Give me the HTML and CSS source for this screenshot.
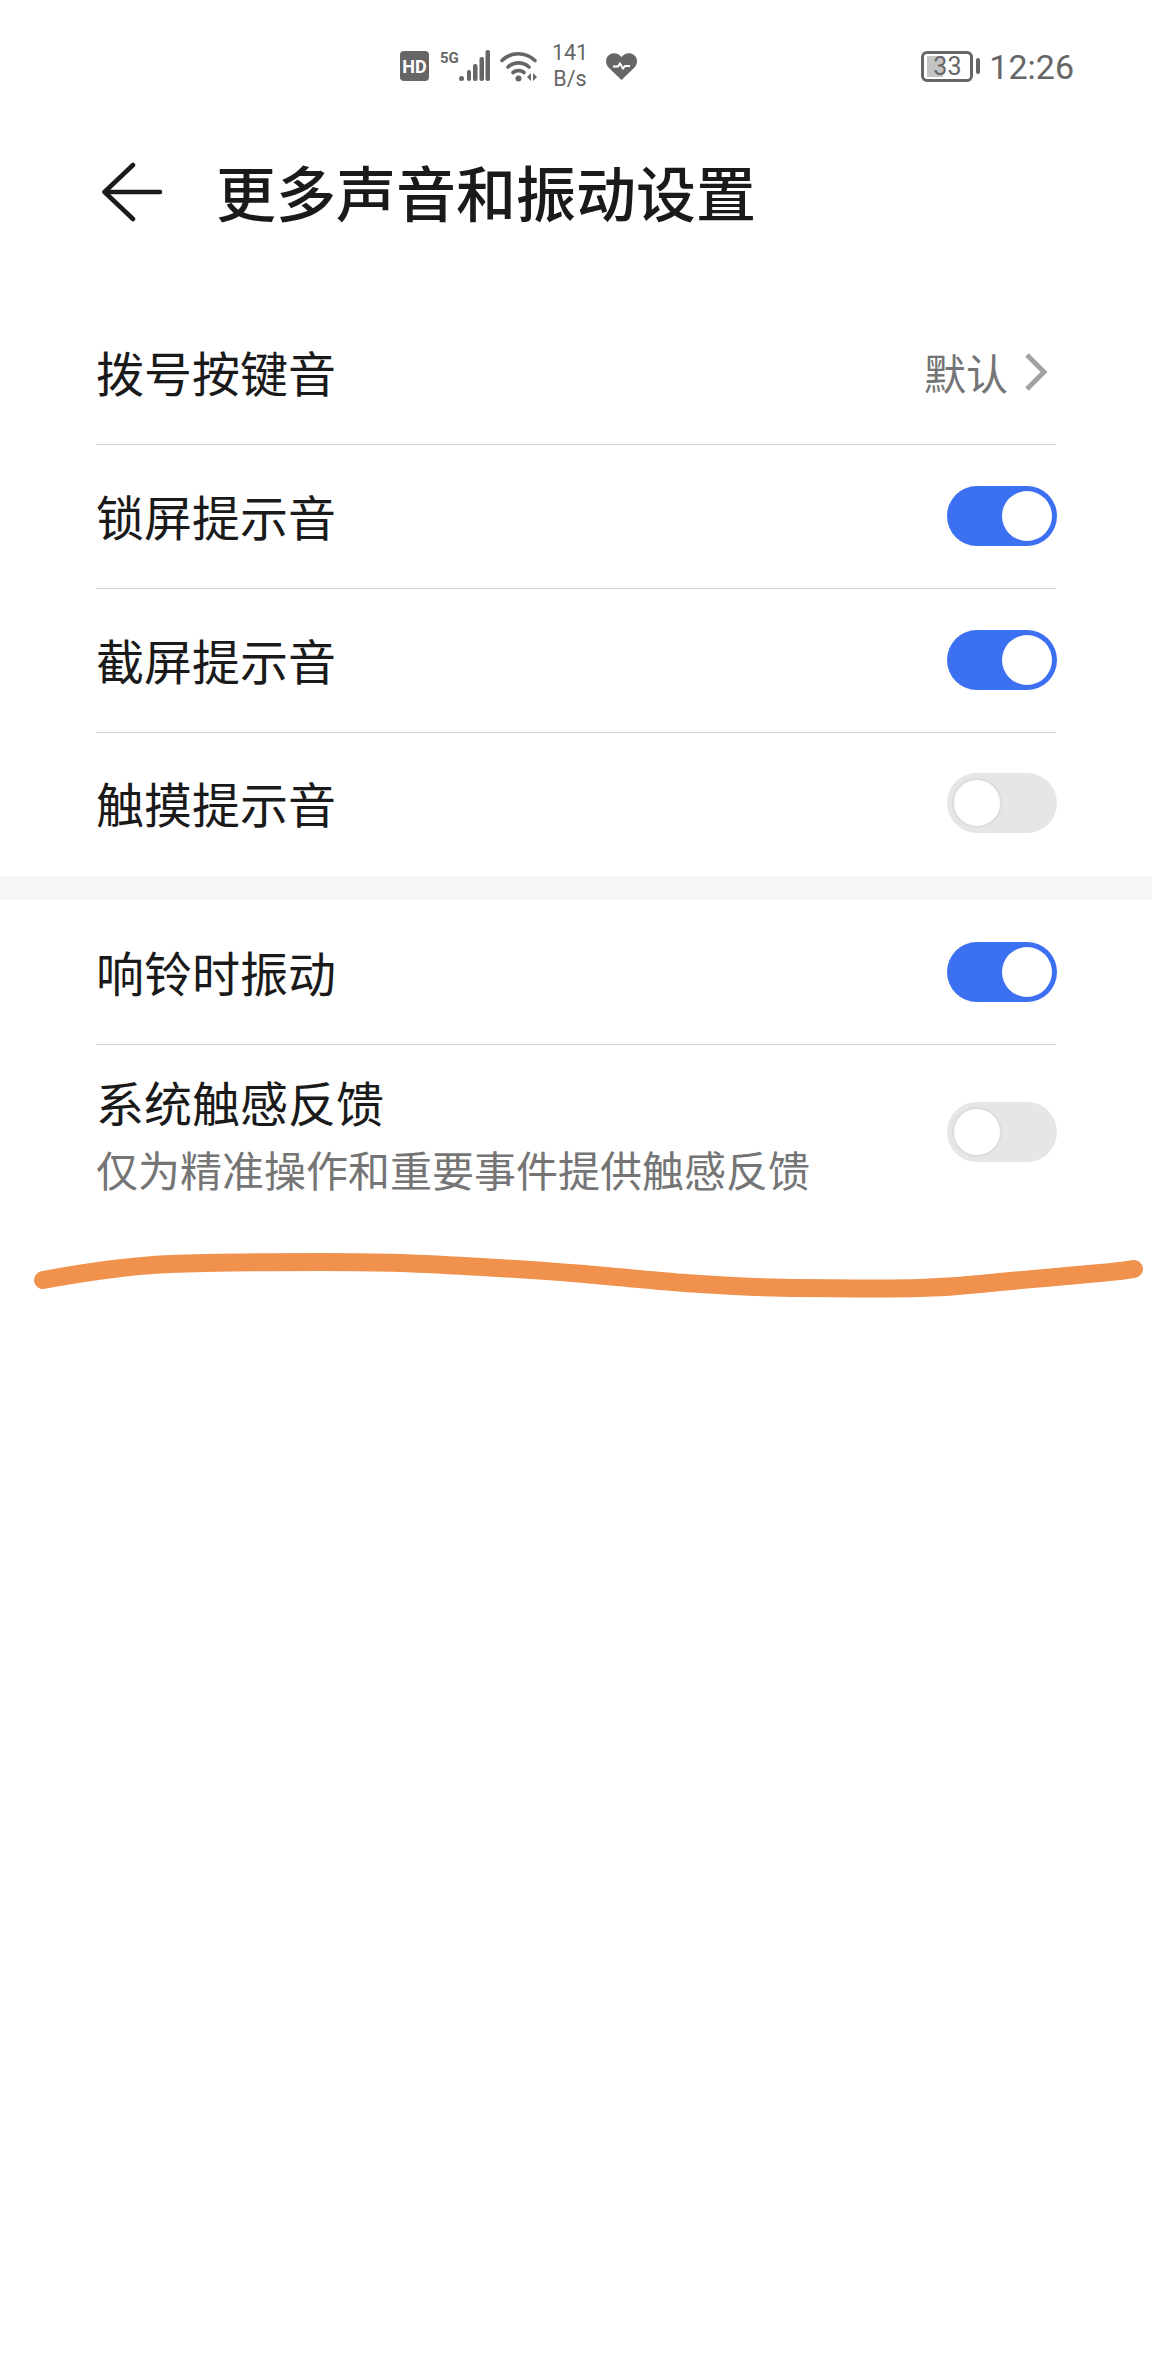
FILE: index.html
```html
<!DOCTYPE html>
<html lang="zh-CN">
<head>
  <meta charset="UTF-8" />
  <title>更多声音和振动设置</title>
  <link rel="stylesheet" href="styles.css">
</head>
<body>

  <div class="statusbar">
    <div class="status-icons">
      <svg class="ico-hd" width="29" height="30" viewBox="0 0 29 30">
        <rect width="29" height="30" rx="4" fill="#666"/>
        <text x="14.5" y="21.5" text-anchor="middle" class="hd-text">HD</text>
      </svg>
      <svg class="ico-signal" width="50" height="34" viewBox="0 0 50 34">
        <text x="0" y="14" class="fiveg-text">5G</text>
        <g fill="#666">
          <circle cx="21.500" cy="29.500" r="2.500"/>
          <rect x="27" y="21" width="4" height="11" rx="2"/>
          <rect x="33" y="15" width="4.500" height="17" rx="2"/>
          <rect x="39.500" y="8" width="4.500" height="24" rx="2"/>
          <rect x="45.500" y="1" width="4.500" height="31" rx="2"/>
        </g>
      </svg>
      <svg class="ico-wifi" width="38" height="32" viewBox="0 0 38 32">
        <g fill="none" stroke="#666" stroke-width="3.6" stroke-linecap="round">
          <path d="M2 10.5C11 1.5 25 1.5 35 10.5"/>
          <path d="M8 17C14 11.5 23 11.5 29 17"/>
          <path d="M13 22.5C16 20 21 20 24 22.5"/>
        </g>
        <circle cx="18.500" cy="28.500" r="3" fill="#666"/>
        <path d="M27 27L31 23V31ZM33 23L37 27L33 31Z" fill="#666"/>
      </svg>
      <div class="net-speed">
        <span>141</span>
        <span>B/s</span>
      </div>
      <svg class="ico-heart" width="31" height="27" viewBox="0 0 31 27">
        <path d="M15.500 27L3 15C-1 11 -1 5 3 2C7 -1 12.500 0 15.500 4C18.500 0 24 -1 28 2C32 5 32 11 28 15Z" fill="#666"/>
        <path d="M7 13.500H12L14 10.500L17 15.500L19 13H24" fill="none" stroke="#fff" stroke-width="2"/>
      </svg>
    </div>
    <div class="status-right">
      <div class="battery">
        <div class="battery-level"></div>
        <span class="battery-num">33</span>
      </div>
      <div class="battery-tip"></div>
      <span class="clock">12:26</span>
    </div>
  </div>

  <div class="titlebar">
    <svg class="back" width="64" height="62" viewBox="0 0 64 62">
      <path d="M33 3L4.500 30L33 57M4.500 30H60" fill="none" stroke="#1a1a1a" stroke-width="4.500" stroke-linecap="round" stroke-linejoin="round"/>
    </svg>
    <h1>更多声音和振动设置</h1>
  </div>

  <div class="group">
    <div class="row">
      <span class="label">拨号按键音</span>
      <div class="value">
        <span>默认</span>
        <svg width="24" height="40" viewBox="0 0 24 40">
          <path d="M3 3L20 20L3 37" fill="none" stroke="#a3a3a3" stroke-width="5"/>
        </svg>
      </div>
    </div>
    <div class="row">
      <span class="label">锁屏提示音</span>
      <div class="toggle on"></div>
    </div>
    <div class="row">
      <span class="label">截屏提示音</span>
      <div class="toggle on"></div>
    </div>
    <div class="row last">
      <span class="label">触摸提示音</span>
      <div class="toggle"></div>
    </div>
  </div>

  <div class="gap"></div>

  <div class="group">
    <div class="row">
      <span class="label">响铃时振动</span>
      <div class="toggle on"></div>
    </div>
    <div class="row last tall">
      <div class="text-col">
        <span class="label">系统触感反馈</span>
        <span class="sub">仅为精准操作和重要事件提供触感反馈</span>
      </div>
      <div class="toggle"></div>
    </div>
  </div>

  <!-- hand drawn marker line over the screenshot -->
  <svg class="marker" width="1152" height="60" viewBox="0 0 1152 60">
    <path d="M43 40C70 35 125 26 170 24S280 22 320 22S370 22 400 23S530 29 606 36S670 42 700 44S770 48 800 48S880 49 920 48S970 45 1000 42S1070 36 1100 33S1125 30 1134 29" fill="none" stroke="#f0924e" stroke-width="18" stroke-linecap="round"/>
  </svg>

</body>
</html>
```

FILE: styles.css
```css
body {
  position: relative;
  width: 1152px;
  height: 2376px;
  margin: 0;
  background-color: #fff;
  color: #1a1a1a;
  font-family: 'Noto Sans CJK SC', 'Noto Sans', sans-serif;
  overflow: hidden;
}

.statusbar {
  display: flex;
  align-items: center;
  justify-content: space-between;
  height: 132px;
  padding: 0 78px 0 400px;
  box-sizing: border-box;
  color: #666;
  font-family: Roboto, sans-serif;
}

.status-icons {
  display: flex;
  align-items: center;
}

.ico-hd {
  margin-right: 11px;
}

.ico-signal {
  margin-right: 10px;
}

.ico-wifi {
  margin-right: 13px;
}

.hd-text {
  font: bold 18px Roboto, sans-serif;
  fill: #fff;
}

.fiveg-text {
  font: bold 15px Roboto, sans-serif;
  fill: #666;
}

.net-speed {
  display: flex;
  flex-direction: column;
  align-items: center;
  width: 38px;
  margin-right: 17px;
  font-size: 21.500px;
  line-height: 26px;
}

.status-right {
  display: flex;
  align-items: center;
}

.battery {
  position: relative;
  width: 52px;
  height: 31px;
  border: 3px solid #666;
  border-radius: 6px;
  box-sizing: border-box;
}

.battery-level {
  width: 16px;
  height: 100%;
  margin-left: 3px;
  padding: 2px 0;
  box-sizing: border-box;
  background-color: #c4c4c4;
  background-clip: content-box;
}

.battery-num {
  position: absolute;
  left: 9px;
  top: 0;
  font-size: 25px;
  line-height: 25px;
}

.battery-tip {
  width: 4px;
  height: 16px;
  margin-left: 3px;
  border-radius: 2px;
  background-color: #666;
}

.clock {
  margin-left: 9px;
  padding-top: 2px;
  font-size: 34px;
}

.titlebar {
  display: flex;
  align-items: center;
  height: 122px;
  padding-left: 100px;
}

.back {
  margin-right: 52px;
}

h1 {
  margin: 0;
  padding-bottom: 6px;
  font-size: 60px;
  font-weight: 500;
}

.titlebar + .group {
  margin-top: 47px;
}

.group {
  padding: 0 96px;
}

.gap + .group {
  padding-top: 1px;
}

.row {
  display: flex;
  align-items: center;
  justify-content: space-between;
  height: 144px;
  box-sizing: border-box;
  border-bottom: 1px solid #cfcfcf;
}

.row.last {
  height: 143px;
  padding-bottom: 1px;
  border-bottom: none;
}

.row.tall {
  height: 176px;
}

.label {
  font-size: 48px;
}

.row > .label {
  display: block;
  padding-bottom: 4px;
}

.value {
  display: flex;
  align-items: center;
  gap: 16px;
  padding-right: 8px;
  padding-bottom: 2px;
  color: #757575;
  font-size: 42px;
}

.text-col {
  display: flex;
  flex-direction: column;
  padding-top: 2px;
}

.text-col .label {
  line-height: 66px;
}

.sub {
  margin-top: 4px;
  color: #757575;
  font-size: 42px;
  line-height: 62px;
}

.toggle {
  position: relative;
  width: 110px;
  height: 60px;
  margin-right: -1px;
  margin-bottom: 2px;
  border-radius: 30px;
  background-color: #e6e6e6;
}

.toggle::after {
  content: "";
  position: absolute;
  left: 5px;
  top: 5px;
  width: 50px;
  height: 50px;
  border: 2px solid #ddd;
  border-radius: 50%;
  box-sizing: border-box;
  background-color: #fff;
}

.toggle.on {
  background-color: #3b71f0;
}

.toggle.on::after {
  left: 55px;
  border: none;
}

.gap {
  height: 24px;
  background-color: #f6f6f6;
}

.marker {
  position: absolute;
  left: 0;
  top: 1240px;
}
```
